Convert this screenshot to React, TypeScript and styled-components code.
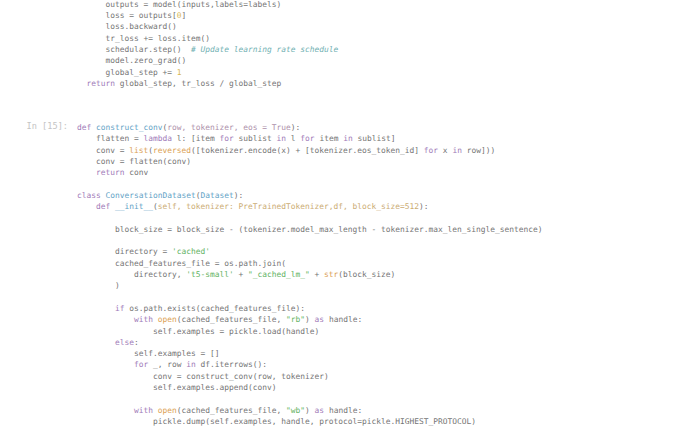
import React from "react";
import styled, { createGlobalStyle } from "styled-components";

const Global = createGlobalStyle`
  html, body { margin: 0; padding: 0; background: #ffffff; }
  body { overflow: hidden; }
`;

type Kind = "t" | "k" | "f" | "s" | "n" | "b" | "c" | "p" | "a";
type Seg = [string, Kind?];

const colors: Record<Kind, string> = {
  t: "#747474",
  k: "#a07ab8",
  f: "#62a2c6",
  s: "#62b262",
  n: "#d6b650",
  b: "#dba052",
  c: "#70b0b2",
  p: "#ad90aa",
  a: "#cbab72",
};

const Page = styled.div`
  width: 680px;
  height: 439px;
  overflow: hidden;
  background: #ffffff;
  display: flex;
  flex-direction: column;
`;

const Cell = styled.div<{ $top: number }>`
  display: flex;
  margin-top: ${(p) => p.$top}px;
`;

const Prompt = styled.div`
  width: 68px;
  flex: none;
  padding-right: 9px;
  text-align: right;
  font-family: "DejaVu Sans Mono", monospace;
  font-size: 8.6px;
  line-height: 11.31px;
  color: #c4c4c4;
  white-space: pre;
  margin-top: -1px;
`;

const Code = styled.pre`
  margin: 0;
  font-family: "DejaVu Sans Mono", "Liberation Mono", monospace;
  font-size: 7.9px;
  line-height: 11.31px;
  color: ${colors.t};
  white-space: pre;
`;

const Tok = styled.span<{ $k: Kind }>`
  color: ${(p) => colors[p.$k]};
  font-style: ${(p) => (p.$k === "c" ? "italic" : "normal")};
`;

const Line = styled.div`
  height: 11.31px;
`;

const renderLines = (lines: Seg[][]) =>
  lines.map((segs, i) => (
    <Line key={i}>
      {segs.map(([text, k = "t"], j) => (
        <Tok key={j} $k={k}>
          {text}
        </Tok>
      ))}
    </Line>
  ));

const cell1: Seg[][] = [
  [["      outputs = model(inputs,labels=labels)"]],
  [["      loss = outputs["], ["0", "n"], ["]"]],
  [["      loss.backward()"]],
  [["      tr_loss += loss.item()"]],
  [["      schedular.step()  "], ["# Update learning rate schedule", "c"]],
  [["      model.zero_grad()"]],
  [["      global_step += "], ["1", "n"]],
  [["  "], ["return", "k"], [" global_step, tr_loss / global_step"]],
];

const cell2: Seg[][] = [
  [["def", "k"], [" "], ["construct_conv", "f"], ["("], ["row, tokenizer, eos = True", "p"], ["):"]],
  [["    flatten = "], ["lambda", "k"], [" l: [item "], ["for", "k"], [" sublist "], ["in", "k"], [" l "], ["for", "k"], [" item "], ["in", "k"], [" sublist]"]],
  [["    conv = "], ["list", "b"], ["("], ["reversed", "b"], ["([tokenizer.encode(x) + [tokenizer.eos_token_id] "], ["for", "k"], [" x "], ["in", "k"], [" row]))"]],
  [["    conv = flatten(conv)"]],
  [["    "], ["return", "k"], [" conv"]],
  [[""]],
  [["class", "k"], [" "], ["ConversationDataset", "f"], ["("], ["Dataset", "f"], ["):"]],
  [["    "], ["def", "k"], [" "], ["__init__", "f"], ["("], ["self, tokenizer: PreTrainedTokenizer,df, block_size=512", "a"], ["):"]],
  [[""]],
  [["        block_size = block_size - (tokenizer.model_max_length - tokenizer.max_len_single_sentence)"]],
  [[""]],
  [["        directory = "], ["'cached'", "s"]],
  [["        cached_features_file = os.path.join("]],
  [["            directory, "], ["'t5-small'", "s"], [" + "], ['"_cached_lm_"', "s"], [" + "], ["str", "b"], ["(block_size)"]],
  [["        )"]],
  [[""]],
  [["        "], ["if", "k"], [" os.path.exists(cached_features_file):"]],
  [["            "], ["with", "k"], [" "], ["open", "b"], ["(cached_features_file, "], ['"rb"', "s"], [") "], ["as", "k"], [" handle:"]],
  [["                self.examples = pickle.load(handle)"]],
  [["        "], ["else", "k"], [":"]],
  [["            self.examples = []"]],
  [["            "], ["for", "k"], [" _, row "], ["in", "k"], [" df.iterrows():"]],
  [["                conv = construct_conv(row, tokenizer)"]],
  [["                self.examples.append(conv)"]],
  [[""]],
  [["            "], ["with", "k"], [" "], ["open", "b"], ["(cached_features_file, "], ['"wb"', "s"], [") "], ["as", "k"], [" handle:"]],
  [["                pickle.dump(self.examples, handle, protocol=pickle.HIGHEST_PROTOCOL)"]],
];

export default function App() {
  return (
    <Page>
      <Global />
      <Cell $top={-1.2}>
        <Prompt> </Prompt>
        <Code>{renderLines(cell1)}</Code>
      </Cell>
      <Cell $top={33}>
        <Prompt>In [15]:</Prompt>
        <Code>{renderLines(cell2)}</Code>
      </Cell>
    </Page>
  );
}
